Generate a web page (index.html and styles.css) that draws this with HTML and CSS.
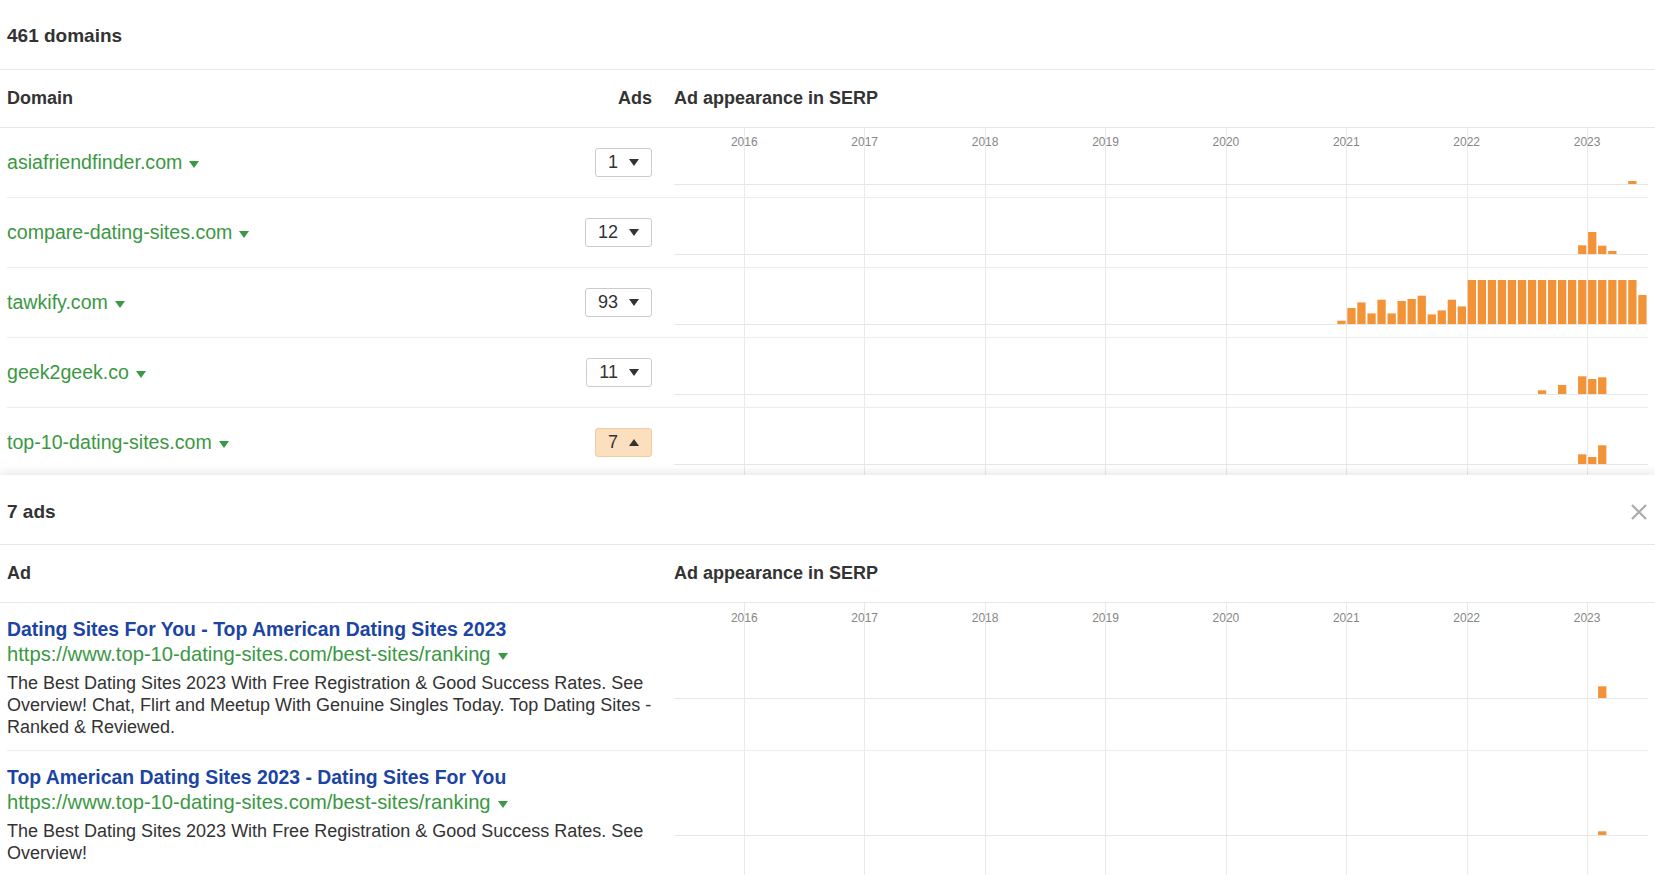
FILE: index.html
```html
<!DOCTYPE html>
<html lang="en">
<head>
<meta charset="utf-8">
<title>Ads</title>
<link rel="stylesheet" href="styles.css">
</head>
<body>
<section class="top">
  <div class="titlebar"><span class="ttl">461 domains</span></div>
  <div class="thead">
    <div class="c-left"><span>Domain</span><span>Ads</span></div>
    <div class="c-chart">Ad appearance in SERP</div>
  </div>
  <div class="tbody">
    <div class="grid">
      <svg class="grid-svg" width="974" height="100%">
        <g class="gl">
          <line x1="70.5" y1="0" x2="70.5" y2="100%"/>
          <line x1="190.5" y1="0" x2="190.5" y2="100%"/>
          <line x1="311.5" y1="0" x2="311.5" y2="100%"/>
          <line x1="431.5" y1="0" x2="431.5" y2="100%"/>
          <line x1="552.5" y1="0" x2="552.5" y2="100%"/>
          <line x1="672.5" y1="0" x2="672.5" y2="100%"/>
          <line x1="793.5" y1="0" x2="793.5" y2="100%"/>
          <line x1="913.5" y1="0" x2="913.5" y2="100%"/>
        </g>
        <g class="yr">
          <text x="70.3" y="18">2016</text>
          <text x="190.7" y="18">2017</text>
          <text x="311.1" y="18">2018</text>
          <text x="431.5" y="18">2019</text>
          <text x="551.9" y="18">2020</text>
          <text x="672.3" y="18">2021</text>
          <text x="792.7" y="18">2022</text>
          <text x="913.1" y="18">2023</text>
        </g>
      </svg>
    </div>

    <div class="row">
      <div class="c-left">
        <span class="dom">asiafriendfinder.com<i class="tri-g"></i></span>
        <span class="cnt">1<i class="tri-d"></i></span>
      </div>
      <div class="c-chart">
        <svg class="bars" width="974" height="45"><line x1="0" y1="44.5" x2="974" y2="44.5"/>
          <rect x="954.2" y="41" width="8.3" height="3"/>
        </svg>
      </div>
    </div>

    <div class="row">
      <div class="c-left">
        <span class="dom">compare-dating-sites.com<i class="tri-g"></i></span>
        <span class="cnt">12<i class="tri-d"></i></span>
      </div>
      <div class="c-chart">
        <svg class="bars" width="974" height="45"><line x1="0" y1="44.5" x2="974" y2="44.5"/>
          <rect x="904.1" y="35.3" width="8.3" height="8.7"/>
          <rect x="914.1" y="22" width="8.3" height="22"/>
          <rect x="924.1" y="35.7" width="8.3" height="8.3"/>
          <rect x="934.2" y="41" width="8.3" height="3"/>
        </svg>
      </div>
    </div>

    <div class="row">
      <div class="c-left">
        <span class="dom">tawkify.com<i class="tri-g"></i></span>
        <span class="cnt">93<i class="tri-d"></i></span>
      </div>
      <div class="c-chart">
        <svg class="bars" width="974" height="45"><line x1="0" y1="44.5" x2="974" y2="44.5"/>
          <rect x="663.3" y="40.7" width="8.3" height="3.3"/>
          <rect x="673.3" y="28" width="8.3" height="16"/>
          <rect x="683.3" y="22.4" width="8.3" height="21.6"/>
          <rect x="693.4" y="33.4" width="8.3" height="10.6"/>
          <rect x="703.4" y="19.7" width="8.3" height="24.3"/>
          <rect x="713.5" y="33.4" width="8.3" height="10.6"/>
          <rect x="723.5" y="21" width="8.3" height="23"/>
          <rect x="733.5" y="19" width="8.3" height="25"/>
          <rect x="743.6" y="15.7" width="8.3" height="28.3"/>
          <rect x="753.6" y="34.4" width="8.3" height="9.6"/>
          <rect x="763.6" y="30.4" width="8.3" height="13.6"/>
          <rect x="773.7" y="19.7" width="8.3" height="24.3"/>
          <rect x="783.7" y="26.4" width="8.3" height="17.6"/>
          <rect x="793.7" y="0" width="8.3" height="44"/>
          <rect x="803.7" y="0" width="8.3" height="44"/>
          <rect x="813.8" y="0" width="8.3" height="44"/>
          <rect x="823.8" y="0" width="8.3" height="44"/>
          <rect x="833.8" y="0" width="8.3" height="44"/>
          <rect x="843.9" y="0" width="8.3" height="44"/>
          <rect x="853.9" y="0" width="8.3" height="44"/>
          <rect x="863.9" y="0" width="8.3" height="44"/>
          <rect x="874.0" y="0" width="8.3" height="44"/>
          <rect x="884.0" y="0" width="8.3" height="44"/>
          <rect x="894.0" y="0" width="8.3" height="44"/>
          <rect x="904.1" y="0" width="8.3" height="44"/>
          <rect x="914.1" y="0" width="8.3" height="44"/>
          <rect x="924.1" y="0" width="8.3" height="44"/>
          <rect x="934.2" y="0" width="8.3" height="44"/>
          <rect x="944.2" y="0" width="8.3" height="44"/>
          <rect x="954.2" y="0" width="8.3" height="44"/>
          <rect x="964.3" y="15" width="8.3" height="29"/>
        </svg>
      </div>
    </div>

    <div class="row">
      <div class="c-left">
        <span class="dom">geek2geek.co<i class="tri-g"></i></span>
        <span class="cnt">11<i class="tri-d"></i></span>
      </div>
      <div class="c-chart">
        <svg class="bars" width="974" height="45"><line x1="0" y1="44.5" x2="974" y2="44.5"/>
          <rect x="863.9" y="40.3" width="8.3" height="3.7"/>
          <rect x="884.0" y="35" width="8.3" height="9"/>
          <rect x="904.1" y="26.3" width="8.3" height="17.7"/>
          <rect x="914.1" y="29" width="8.3" height="15"/>
          <rect x="924.1" y="27.3" width="8.3" height="16.7"/>
        </svg>
      </div>
    </div>

    <div class="row">
      <div class="c-left">
        <span class="dom">top-10-dating-sites.com<i class="tri-g"></i></span>
        <span class="cnt active">7<i class="tri-u"></i></span>
      </div>
      <div class="c-chart">
        <svg class="bars" width="974" height="45"><line x1="0" y1="44.5" x2="974" y2="44.5"/>
          <rect x="904.1" y="34.3" width="8.3" height="9.7"/>
          <rect x="914.1" y="37" width="8.3" height="7"/>
          <rect x="924.1" y="25.3" width="8.3" height="18.7"/>
        </svg>
      </div>
    </div>
  </div>
</section>

<section class="bottom">
  <div class="titlebar tb-ads"><span class="ttl">7 ads</span>
    <svg class="close" width="16" height="16" viewBox="0 0 16 16"><path d="M1 1 L15 15 M15 1 L1 15"/></svg>
  </div>
  <div class="thead">
    <div class="c-left"><span>Ad</span></div>
    <div class="c-chart">Ad appearance in SERP</div>
  </div>
  <div class="abody">
    <div class="grid">
      <svg class="grid-svg" width="974" height="100%">
        <g class="gl">
          <line x1="70.5" y1="0" x2="70.5" y2="100%"/>
          <line x1="190.5" y1="0" x2="190.5" y2="100%"/>
          <line x1="311.5" y1="0" x2="311.5" y2="100%"/>
          <line x1="431.5" y1="0" x2="431.5" y2="100%"/>
          <line x1="552.5" y1="0" x2="552.5" y2="100%"/>
          <line x1="672.5" y1="0" x2="672.5" y2="100%"/>
          <line x1="793.5" y1="0" x2="793.5" y2="100%"/>
          <line x1="913.5" y1="0" x2="913.5" y2="100%"/>
        </g>
        <g class="yr">
          <text x="70.3" y="19">2016</text>
          <text x="190.7" y="19">2017</text>
          <text x="311.1" y="19">2018</text>
          <text x="431.5" y="19">2019</text>
          <text x="551.9" y="19">2020</text>
          <text x="672.3" y="19">2021</text>
          <text x="792.7" y="19">2022</text>
          <text x="913.1" y="19">2023</text>
        </g>
      </svg>
    </div>

    <div class="adrow">
      <div class="ad">
        <div class="ad-title">Dating Sites For You - Top American Dating Sites 2023</div>
        <div class="ad-url">https://www.top-10-dating-sites.com/best-sites/ranking<i class="tri-g"></i></div>
        <div class="ad-desc">The Best Dating Sites 2023 With Free Registration &amp; Good Success Rates. See Overview! Chat, Flirt and Meetup With Genuine Singles Today. Top Dating Sites - Ranked &amp; Reviewed.</div>
      </div>
      <div class="c-chart">
        <svg class="bars" width="974" height="45"><line x1="0" y1="44.5" x2="974" y2="44.5"/>
          <rect x="924.1" y="32.3" width="8.3" height="11.7"/>
        </svg>
      </div>
    </div>

    <div class="adrow">
      <div class="ad">
        <div class="ad-title">Top American Dating Sites 2023 - Dating Sites For You</div>
        <div class="ad-url">https://www.top-10-dating-sites.com/best-sites/ranking<i class="tri-g"></i></div>
        <div class="ad-desc">The Best Dating Sites 2023 With Free Registration &amp; Good Success Rates. See Overview!</div>
      </div>
      <div class="c-chart">
        <svg class="bars" width="974" height="45"><line x1="0" y1="44.5" x2="974" y2="44.5"/>
          <rect x="924.1" y="40.3" width="8.3" height="3.7"/>
        </svg>
      </div>
    </div>
  </div>
</section>
</body>
</html>
```

FILE: styles.css
```css
* { box-sizing: border-box; }
html, body { margin: 0; padding: 0; }
body {
  width: 1655px;
  height: 875px;
  overflow: hidden;
  background: #fff;
  font-family: "Liberation Sans", Arial, Helvetica, sans-serif;
  color: #333;
}

.top {
  height: 475px;
  overflow: hidden;
}

.titlebar {
  height: 70px;
  border-bottom: 1px solid #e6e6e6;
  display: flex;
  align-items: center;
  justify-content: space-between;
  padding: 2px 8px 0 7px;
}
.tb-ads { padding-top: 5px; }
.ttl {
  font-size: 19px;
  font-weight: bold;
  color: #333;
}

.thead {
  height: 58px;
  border-bottom: 1px solid #e6e6e6;
  display: flex;
  align-items: center;
  padding: 0 7px;
  font-size: 18px;
  font-weight: bold;
  color: #333;
}
.c-left {
  width: 645px;
  flex: none;
  display: flex;
  align-items: center;
  justify-content: space-between;
}
.c-chart {
  width: 974px;
  flex: none;
  margin-left: 22px;
}

.tbody, .abody {
  position: relative;
}
.grid {
  position: absolute;
  left: 674px;
  top: 0;
  bottom: 0;
  width: 974px;
  z-index: 0;
}
.grid-svg { display: block; height: 100%; }
.gl line { stroke: #e9e9e9; stroke-width: 1; }
.yr text {
  font-family: "Liberation Sans", Arial, sans-serif;
  font-size: 12px;
  fill: #868686;
  text-anchor: middle;
}

.row {
  position: relative;
  z-index: 1;
  height: 70px;
  margin: 0 7px;
  border-bottom: 1px solid #ececec;
  display: flex;
  align-items: center;
}
.row .c-chart {
  display: flex;
  align-items: center;
  height: 100%;
}
.bars { display: block; }
.bars line { stroke: #e6e6e6; stroke-width: 1; }
.bars rect { fill: #f29338; }

.dom {
  font-size: 19.6px;
  color: #3b9843;
  display: inline-flex;
  align-items: center;
}
.tri-g {
  display: inline-block;
  width: 0;
  height: 0;
  margin-left: 7px;
  margin-top: 4px;
  border-left: 5px solid transparent;
  border-right: 5px solid transparent;
  border-top: 7px solid #3b9843;
}

.cnt {
  height: 29px;
  border: 1px solid #cbcbcb;
  border-radius: 3px;
  padding: 0 12px;
  display: inline-flex;
  align-items: center;
  gap: 11px;
  font-size: 18px;
  color: #333;
  background: #fff;
}
.cnt.active {
  background: #fbdfbf;
  border-color: #f3cb9f;
}
.tri-d, .tri-u {
  display: inline-block;
  width: 0;
  height: 0;
  border-left: 5px solid transparent;
  border-right: 5px solid transparent;
}
.tri-d { border-top: 7px solid #333; }
.tri-u { border-bottom: 7px solid #333; }

.bottom {
  position: relative;
  z-index: 2;
  height: 400px;
  background: #fff;
  box-shadow: 0 -3px 9px rgba(0, 0, 0, 0.09);
}
.close { display: block; }
.close path { stroke: #ababab; stroke-width: 2.2; fill: none; }

.adrow {
  position: relative;
  z-index: 1;
  margin: 0 7px;
  border-bottom: 1px solid #ececec;
  display: flex;
  align-items: stretch;
}
.adrow .c-chart {
  display: flex;
  align-items: center;
}
.ad {
  width: 645px;
  flex: none;
  padding: 14px 0 12px;
}
.ad-title {
  font-size: 19.4px;
  line-height: 25px;
  font-weight: bold;
  color: #1b44a3;
}
.ad-url {
  font-size: 20.2px;
  line-height: 25px;
  color: #3b9843;
  display: flex;
  align-items: center;
}
.ad-desc {
  margin-top: 5px;
  margin-right: -15px;
  font-size: 18px;
  line-height: 22px;
  color: #333;
}
```
